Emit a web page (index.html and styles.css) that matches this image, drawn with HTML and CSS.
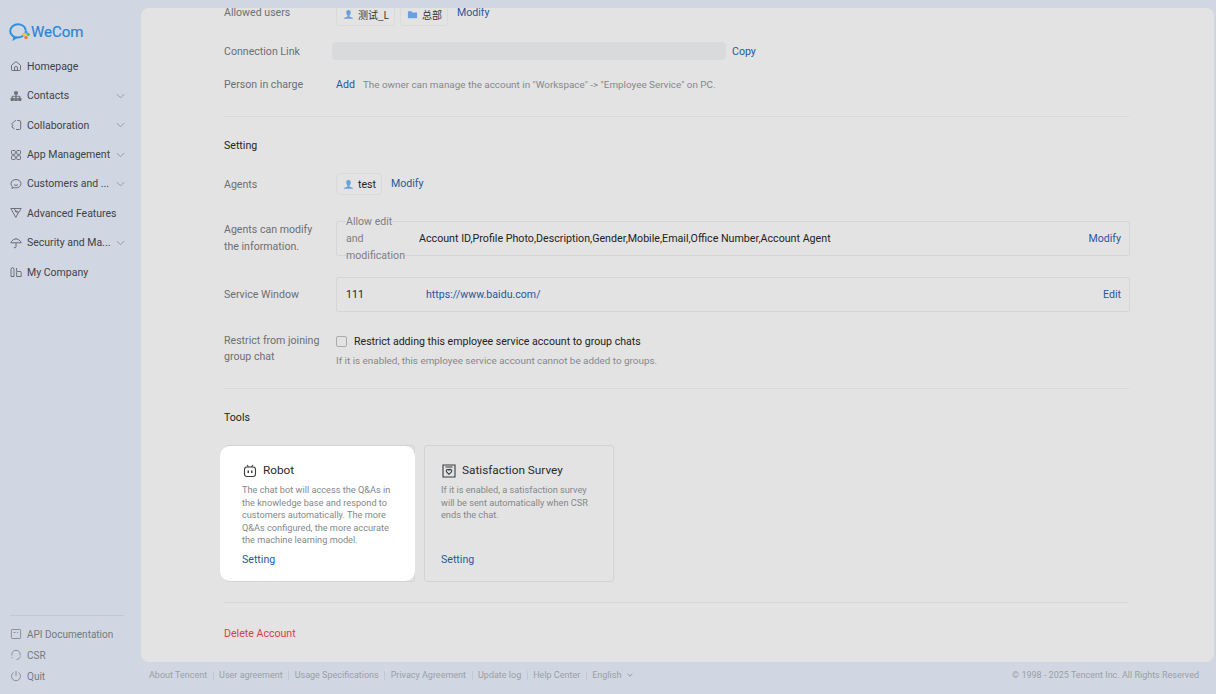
FILE: index.html
```html
<!DOCTYPE html>
<html lang="en">
<head>
<meta charset="utf-8">
<title>WeCom</title>
<link rel="stylesheet" href="styles.css">
</head>
<body>
<div class="app">
  <aside class="sidebar">
    <div class="logo">
      <svg class="logo-mark" width="22" height="18" viewBox="0 0 22 18" fill="none"><path d="M13.500 13C12.200 14 10.600 14.500 9 14.500 4.800 14.500 1.200 11.800 1.200 8 1.200 4.200 4.800 1.300 9 1.300c3.800 0 6.900 2.300 7.600 5.400" stroke="#2e8fe0" stroke-width="2" stroke-linecap="round"/><path d="M5 14l-.5 2.500 3.300-2" stroke="#2e8fe0" stroke-width="1.500" stroke-linecap="round"/><circle cx="14.800" cy="11.300" r="1.600" fill="#f2c230"/><circle cx="19.200" cy="11.300" r="1.600" fill="#58b560"/><circle cx="17" cy="9" r="1.500" fill="#3c93e0"/><circle cx="17" cy="14.500" r="1.700" fill="#ef7a30"/></svg>
      <span class="logo-text">WeCom</span>
    </div>
    <nav class="nav">
      <a class="nav-item"><svg class="ico" viewBox="0 0 12 12"><path d="M1.500 5.300L6 1.500l4.500 3.800v4.400a.8.800 0 01-.8.800H2.300a.8.800 0 01-.8-.8zM4.500 10.500V8a1.500 1.500 0 013 0v2.500"/></svg><span class="nav-label">Homepage</span></a>
      <a class="nav-item"><svg class="ico" viewBox="0 0 12 12"><path class="solid" d="M4.700 1.800h2.600v2.400H4.700zM1 8.200h2.400v2.300H1zM4.800 8.200h2.400v2.300H4.800zM8.600 8.200H11v2.300H8.600z"/><path d="M6 4v4.200M2.200 8.200V6.300h7.600v1.900"/></svg><span class="nav-label">Contacts</span><svg class="chev" viewBox="0 0 10 6"><path d="M1 1l4 4 4-4"/></svg></a>
      <a class="nav-item"><svg class="ico" viewBox="0 0 12 12"><path d="M4.500 2.200l-3 3 1.600 1.300L1.800 8l2.700 2M7.200 1.500h2a1.500 1.500 0 011.500 1.500v6a1.500 1.500 0 01-1.500 1.500H6M4.500 2.200c.5-.5 1-.7 1.500-.7"/></svg><span class="nav-label">Collaboration</span><svg class="chev" viewBox="0 0 10 6"><path d="M1 1l4 4 4-4"/></svg></a>
      <a class="nav-item"><svg class="ico" viewBox="0 0 12 12"><rect x="1.500" y="1.500" width="3.800" height="3.800" rx=".8"/><rect x="6.700" y="1.500" width="3.800" height="3.800" rx=".8"/><rect x="1.500" y="6.700" width="3.800" height="3.800" rx=".8"/><rect x="6.700" y="6.700" width="3.800" height="3.800" rx=".8"/></svg><span class="nav-label">App Management</span><svg class="chev" viewBox="0 0 10 6"><path d="M1 1l4 4 4-4"/></svg></a>
      <a class="nav-item"><svg class="ico" viewBox="0 0 12 12"><path d="M6 1.500c2.800 0 5 1.800 5 4.200S8.800 9.900 6 9.900c-.8 0-1.500-.1-2.200-.4L2 10.500l.3-2C1.500 7.800 1 6.800 1 5.700 1 3.300 3.200 1.500 6 1.500zM4 6.500c.5.600 1.200.9 2 .9s1.500-.3 2-.9"/></svg><span class="nav-label">Customers and ...</span><svg class="chev" viewBox="0 0 10 6"><path d="M1 1l4 4 4-4"/></svg></a>
      <a class="nav-item"><svg class="ico" viewBox="0 0 12 12"><path d="M.8 1.500L5.800 10.500l2-3.800-3.800-5.200zM4 1.500l7.200 0-3.400 5.200M4.800 4.300h3.400"/></svg><span class="nav-label">Advanced Features</span></a>
      <a class="nav-item"><svg class="ico" viewBox="0 0 12 12"><path d="M.8 5.800C1.700 3.500 3.700 2 6 2s4.300 1.500 5.200 3.800zM6 1v1M6 5.800v4c0 1.300-2 1.300-2.200.2"/></svg><span class="nav-label">Security and Ma...</span><svg class="chev" viewBox="0 0 10 6"><path d="M1 1l4 4 4-4"/></svg></a>
      <a class="nav-item"><svg class="ico" viewBox="0 0 12 12"><path d="M1 10.500V3.200a1.500 1.500 0 013 0v7.300zM6.600 10.500V6.300a.8.800 0 01.8-.8h3a.8.800 0 01.8.800v4.200zM6.600 5.500V2"/></svg><span class="nav-label">My Company</span></a>
    </nav>
    <div class="side-foot">
      <a class="foot-item"><svg class="ico" viewBox="0 0 12 12"><path d="M2.200 1.500h7.600a.8.800 0 01.8.800v7.400a.8.800 0 01-.8.800H2.200a.8.800 0 01-.8-.8V2.300a.8.800 0 01.8-.8zM3.500 4.500h2M7 4.500h1"/></svg><span>API Documentation</span></a>
      <a class="foot-item"><svg class="ico" viewBox="0 0 12 12"><path d="M1.800 6.500V5.500a4.200 4.200 0 018.400 0v1M10.200 7.500c-.3 1.700-1.700 2.900-3.700 2.900M1.800 8c.2.500.5.900.8 1.200"/></svg><span>CSR</span></a>
      <a class="foot-item"><svg class="ico" viewBox="0 0 12 12"><path d="M3.500 2.500a4.500 4.500 0 105 0M6 1v5"/></svg><span>Quit</span></a>
    </div>
  </aside>
  <div class="content">
    <main class="panel">
      <div class="scroller">
        <div class="row row-allowed">
          <div class="label">Allowed users</div>
          <div class="value">
            <span class="chip"><svg class="chip-ico" viewBox="0 0 12 12"><path d="M6 1a2.500 2.500 0 012.500 2.500C8.500 5.500 7 7 7 7.800c0 .8 4 1 4 2.700H1c0-1.700 4-1.900 4-2.700C5 7 3.500 5.500 3.500 3.500A2.500 2.500 0 016 1z"/></svg><span class="cjk">测试_L</span></span>
            <span class="chip"><svg class="chip-ico" viewBox="0 0 12 12"><path d="M1 2.500h4l1 1.300h5v6.200H1z"/></svg><span class="cjk">总部</span></span>
            <a class="link link-modify">Modify</a>
          </div>
        </div>
        <div class="row row-conn">
          <div class="label label-narrow">Connection Link</div>
          <div class="linkbox"></div>
          <a class="link copy">Copy</a>
        </div>
        <div class="row row-person">
          <div class="label">Person in charge</div>
          <a class="link">Add</a>
          <span class="hint owner">The owner can manage the account in "Workspace" -&gt; "Employee Service" on PC.</span>
        </div>
        <hr class="rule rule-a">
        <h2 class="heading">Setting</h2>
        <div class="row row-agents">
          <div class="label">Agents</div>
          <span class="chip chip-test"><svg class="chip-ico" viewBox="0 0 12 12"><path d="M6 1a2.500 2.500 0 012.500 2.500C8.500 5.500 7 7 7 7.800c0 .8 4 1 4 2.700H1c0-1.700 4-1.900 4-2.700C5 7 3.500 5.500 3.500 3.500A2.500 2.500 0 016 1z"/></svg><span class="dark">test</span></span>
          <a class="link link-modify2">Modify</a>
        </div>
        <div class="row row-info">
          <div class="label two label-up">Agents can modify<br>the information.</div>
          <div class="box box-edit">
            <div class="legend"><span class="legend-text">Allow edit<br>and<br>modification</span></div>
            <span class="dark box-text">Account ID,Profile Photo,Description,Gender,Mobile,Email,Office Number,Account Agent</span>
            <a class="link push">Modify</a>
          </div>
        </div>
        <div class="row row-window">
          <div class="label">Service Window</div>
          <div class="box box-window">
            <span class="dark win-name">111</span>
            <a class="link">https://www.baidu.com/</a>
            <a class="link push">Edit</a>
          </div>
        </div>
        <div class="row row-restrict">
          <div class="label two label-tight">Restrict from joining<br>group chat</div>
          <div class="restrict">
            <label class="check"><span class="checkbox"></span><span class="dark">Restrict adding this employee service account to group chats</span></label>
            <div class="hint restrict-hint">If it is enabled, this employee service account cannot be added to groups.</div>
          </div>
        </div>
        <hr class="rule rule-b">
        <h2 class="heading heading-tools">Tools</h2>
        <div class="cards">
          <section class="card card-robot">
            <div class="spot"></div>
            <div class="card-body">
              <h3 class="card-title"><svg class="card-ico" viewBox="0 0 14 14"><path d="M4 1l1.500 2M10 1L8.500 3"/><rect x="1.500" y="3" width="11" height="9.500" rx="2.500"/><path class="robot-eye" d="M4.500 6.500h1.500v2.500H4.500zM8 6.500h1.500v2.500H8z"/></svg>Robot</h3>
              <p class="card-text">The chat bot will access the Q&amp;As in the knowledge base and respond to customers automatically. The more Q&amp;As configured, the more accurate the machine learning model.</p>
              <a class="link card-link">Setting</a>
            </div>
          </section>
          <section class="card">
            <div class="card-body">
              <h3 class="card-title"><svg class="card-ico" viewBox="0 0 14 14"><path d="M1 1h12v12H1zM3.500 3h7M7 10.300L4.600 7.900a1.500 1.500 0 012.400-1.800 1.500 1.500 0 012.400 1.800z"/></svg>Satisfaction Survey</h3>
              <p class="card-text">If it is enabled, a satisfaction survey will be sent automatically when CSR ends the chat.</p>
              <a class="link card-link">Setting</a>
            </div>
          </section>
        </div>
        <hr class="rule rule-c">
        <a class="delete">Delete Account</a>
      </div>
    </main>
    <footer class="footer">
      <a>About Tencent</a><i></i><a>User agreement</a><i></i><a>Usage Specifications</a><i></i><a>Privacy Agreement</a><i></i><a>Update log</a><i></i><a>Help Center</a><i></i><a class="lang">English<svg class="lang-chev" viewBox="0 0 10 6"><path d="M1 1l4 4 4-4"/></svg></a>
      <span class="copyright">© 1998 - 2025 Tencent Inc. All Rights Reserved</span>
    </footer>
  </div>
</div>
</body>
</html>
```
FILE: styles.css
```css
* { box-sizing: border-box; }
html, body { margin: 0; height: 100%; }
body {
  font-family: Roboto, "Noto Sans CJK SC", sans-serif;
  font-size: 10.600px;
  background: #d0d7e2;
  color: #5f6266;
  overflow: hidden;
}
a { text-decoration: none; }
.app { display: flex; width: 1216px; height: 694px; }

/* sidebar */
.sidebar { width: 141px; flex: none; display: flex; flex-direction: column; padding: 22px 10px 0; }
.logo { display: flex; align-items: center; gap: 0; margin-left: -1px; height: 20px; }
.logo-text { font-size: 15px; color: #2b85d8; -webkit-text-stroke: .2px #2b85d8; }
.nav { margin-top: 9.500px; display: flex; flex-direction: column; }
.nav-item { display: flex; align-items: center; height: 29.450px; font-size: 10.500px; color: #3f4246; white-space: nowrap; }
.nav-label { flex: 1; }
.ico { width: 12px; height: 12px; flex: none; margin-right: 5px; fill: none; stroke: #62666c; stroke-width: .9; }
.ico .solid { fill: #7a7e84; }
.chev { width: 9px; height: 6px; flex: none; margin-right: 6px; fill: none; stroke: #8f959c; stroke-width: 1; }
.side-foot { margin-top: auto; margin-bottom: 7.500px; border-top: 1px solid #c3cad5; padding-top: 8px; margin-right: 7px; }
.foot-item { display: flex; align-items: center; height: 21px; font-size: 10px; color: #75797f; white-space: nowrap; }
.foot-item .ico { stroke: #85898f; }

/* main panel */
.content { flex: 1; min-width: 0; display: flex; flex-direction: column; padding: 8px 2px 0 0; }
.panel { height: 654px; flex: none; background: #e3e3e3; border-radius: 8px; overflow: hidden; }
.scroller { margin-top: -8px; padding: 0 85px 0 83px; }
.row { display: flex; align-items: center; }
.label { width: 112px; flex: none; color: #6c6f73; white-space: nowrap; }
.label.two { line-height: 17px; }
.label.label-tight { line-height: 16px; }
.label-up { padding-bottom: 2px; }
.label-narrow { width: 108px; }
.link { color: #26589f; white-space: nowrap; cursor: pointer; }
.dark { color: #222; white-space: nowrap; }
.hint { color: #85888c; font-size: 9.900px; white-space: nowrap; }

.row-allowed { height: 24px; margin-top: 8px; align-items: flex-start; }
.row-allowed .label { margin-top: -3px; line-height: 16px; }
.value { display: flex; align-items: flex-start; margin-top: -5px; gap: 5px; }
.chip { display: inline-flex; align-items: center; height: 23px; padding: 0 5px 0 6px; border: 1px solid #dadada; border-radius: 4px; color: #333; }
.chip-ico { width: 11px; height: 11px; margin-right: 4px; fill: #6b9fe0; flex: none; }
.cjk { font-family: "Noto Sans CJK SC", Roboto, sans-serif; font-size: 10px; }
.link-modify { margin-left: 4px; line-height: 16px; margin-top: 2px; }

.row-conn { height: 18px; margin-top: 10px; }
.linkbox { width: 394px; height: 18px; background: #d9dadb; border-radius: 4px; }
.copy { margin-left: 6px; }
.row-person { height: 18px; margin-top: 15px; }
.owner { margin-left: 8px; }
.rule { border: 0; border-top: 1px solid #d8d8d8; margin: 0; }
.rule-a { margin-top: 23px; }
.heading { font-size: 10.600px; font-weight: 400; color: #222; margin: 0; line-height: 16px; }
.rule-a + .heading { margin-top: 21px; }

.row-agents { height: 22px; margin-top: 19px; }
.chip-test { height: 22px; }
.link-modify2 { margin-left: 9px; margin-top: -1px; }
.row-info { margin-top: 26px; height: 35px; }
.box { flex: 1; min-width: 0; height: 35px; display: flex; align-items: center; border: 1px solid #d6d6d6; border-radius: 2px; padding: 0 8px 0 9px; margin-right: -1px; }
.box-edit { height: 35px; }
.box-text { font-size: 10.680px; }
.legend { width: 73px; flex: none; line-height: 17px; white-space: nowrap; }
.legend-text { color: #7d8084; background: #e3e3e3; }
.push { margin-left: auto; }
.row-window { margin-top: 21px; height: 35px; }
.win-name { width: 80px; }
.row-restrict { margin-top: 21px; align-items: flex-start; }
.check { display: flex; align-items: center; gap: 7px; height: 17px; }
.checkbox { width: 11px; height: 11px; border: 1px solid #a9abad; border-radius: 2px; flex: none; }
.restrict-hint { margin-top: 3px; line-height: 16px; }
.rule-b { margin-top: 19px; }
.heading-tools { margin-top: 21px; }

/* tools */
.cards { display: flex; gap: 9px; margin-top: 19px; padding-left: 1px; }
.card { position: relative; width: 190px; height: 137px; border: 1px solid #d3d3d3; border-radius: 3px; }
.spot { position: absolute; left: -6px; right: -1px; top: 0; bottom: 0; background: #fff; border-radius: 10px; }
.card-body { position: relative; height: 100%; padding: 16px 14px 0 16px; display: flex; flex-direction: column; }
.card-title { display: flex; align-items: center; gap: 6px; margin: 0 0 5px 1px; font-size: 11.800px; font-weight: 400; color: #2b2b2b; line-height: 17px; }
.card-ico { width: 14px; height: 14px; fill: none; stroke: #3a3d40; stroke-width: 1.100; }
.robot-eye { fill: #3a3d40; stroke: none; }
.card-text { margin: 0; font-size: 9.200px; line-height: 12.500px; color: #85888c; }
.card-link { position: absolute; left: 16px; bottom: 15px; }
.rule-c { margin-top: 20px; }
.delete { display: block; margin-top: 23px; color: #d8403f; line-height: 16px; }

/* footer */
.footer { flex: 1; display: flex; align-items: center; padding: 0 15px 6px 8px; font-size: 9px; color: #9a9fa6; white-space: nowrap; }
.footer i { width: 1px; height: 9px; background: #c3c9d2; margin: 0 5.500px; }
.lang { display: inline-flex; align-items: center; gap: 6px; }
.lang-chev { width: 6px; height: 4px; fill: none; stroke: #8f959c; stroke-width: 1.500; }
.copyright { margin-left: auto; }
```
